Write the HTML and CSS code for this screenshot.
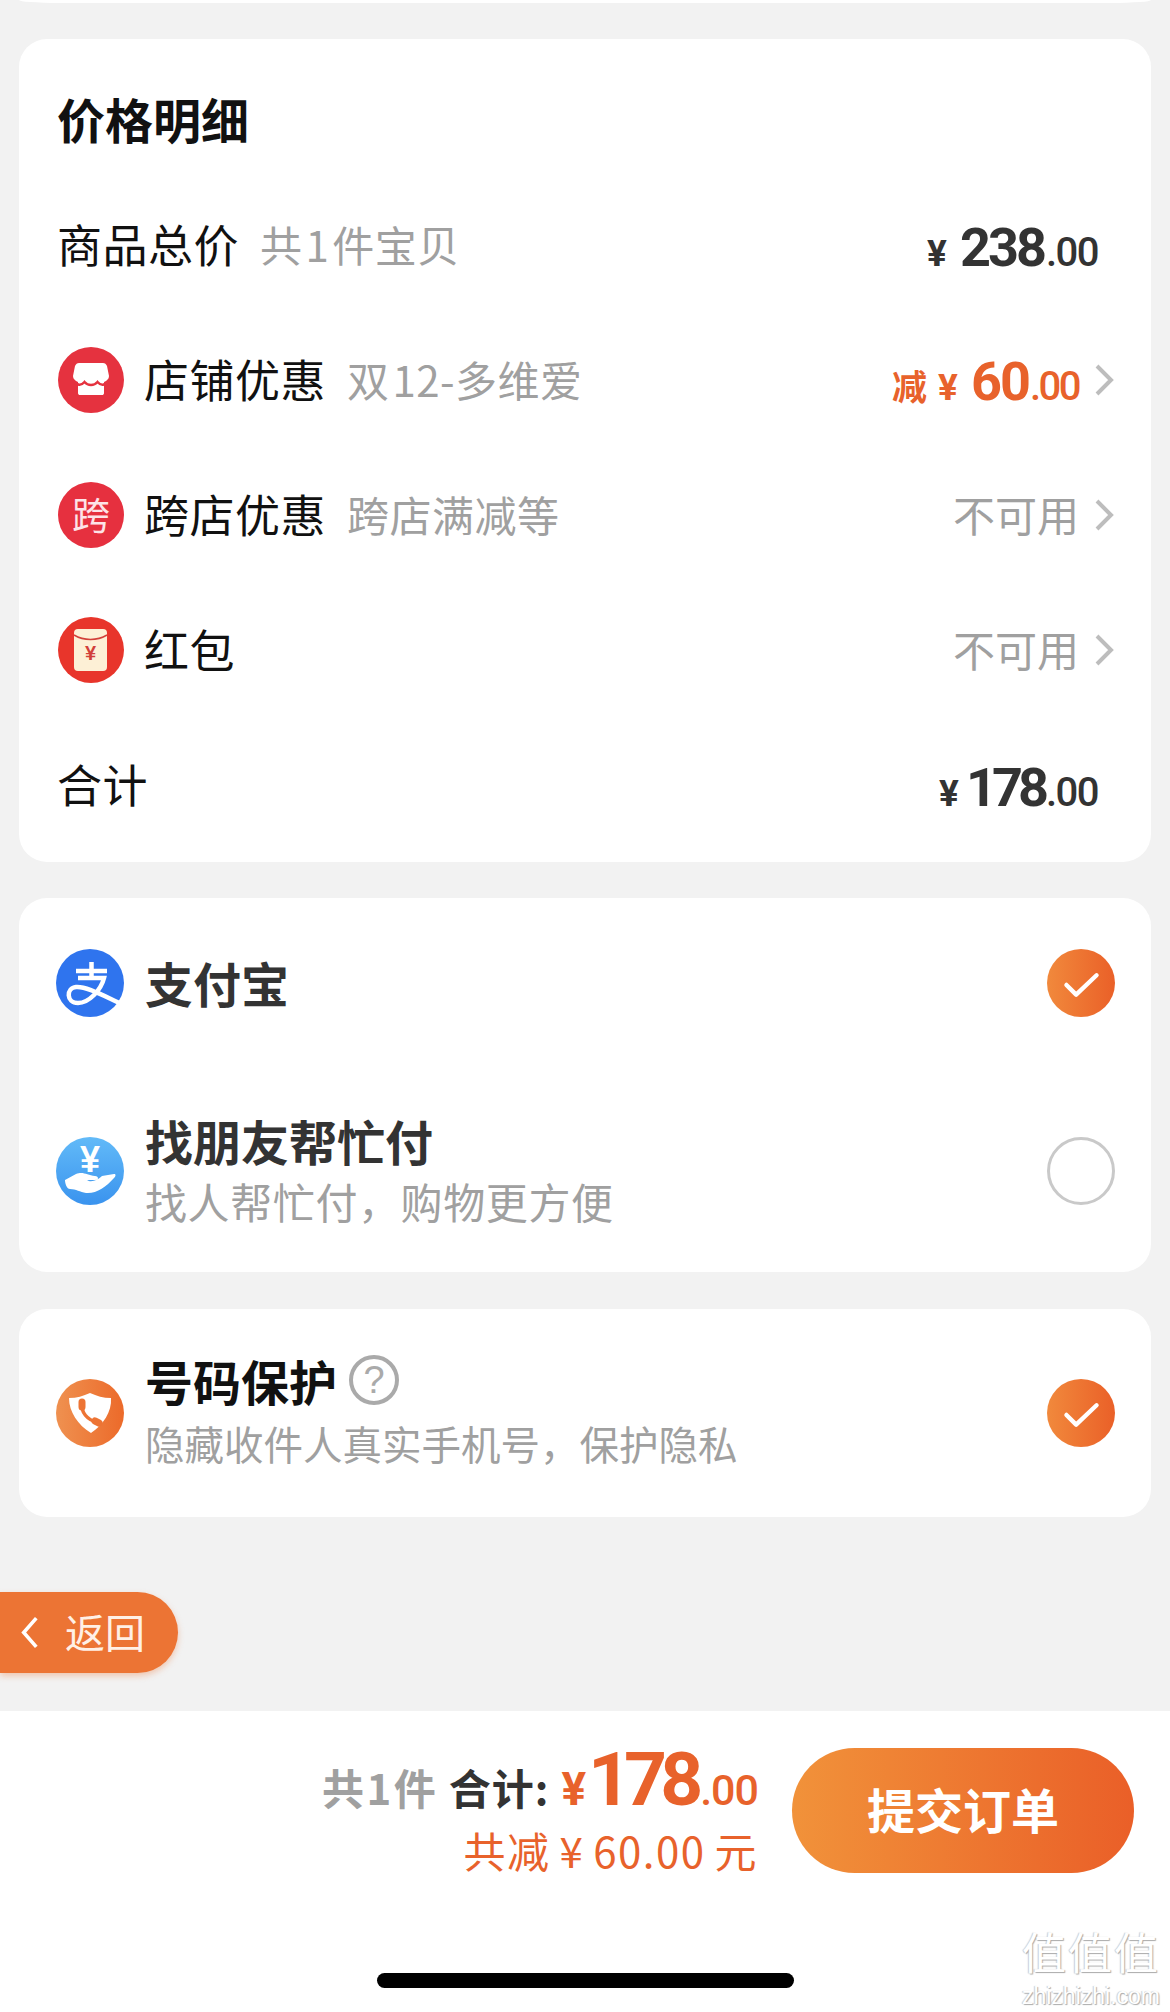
FILE: index.html
```html
<!DOCTYPE html>
<html lang="zh-CN">
<head>
<meta charset="utf-8">
<title>确认订单</title>
<link rel="stylesheet" href="styles.css">
</head>
<body>
<div class="page">
  <main class="main">
    <div class="prev-card"></div>

    <section class="card price-card">
      <h2 class="card-title">价格明细</h2>
      <div class="row">
        <span class="name">商品总价</span><span class="sub">共 1 件宝贝</span>
        <div class="price price-plain"><span class="yen">¥</span><span class="int">238</span><span class="dec">.00</span></div>
      </div>
      <div class="row">
        <svg class="ico" viewBox="0 0 66 66"><circle cx="33" cy="33" r="33" fill="#e5323f"/><path d="M21 16H45C47 16 48 17 49 19L51 29C51 32 49 34 46 35V46C46 47.500 45 48 44 48H22C21 48 20 47.500 20 46V35C17 34 15 32 15 29L17 19C18 17 19 16 21 16Z" fill="#fff"/><path d="M15 33C19 39 23 39 26.500 35C30 39 36 39 39.500 35C43 39 47 39 51 33" fill="none" stroke="#e5323f" stroke-width="2.500"/></svg>
        <span class="name">店铺优惠</span><span class="sub">双 12-多维爱</span>
        <div class="price price-off"><span class="off">减</span><span class="yen">¥</span><span class="int">60</span><span class="dec">.00</span></div>
        <svg class="chev" viewBox="0 0 20 32"><path d="M3 2L17 16L3 30"/></svg>
      </div>
      <div class="row">
        <span class="ico kua">跨</span>
        <span class="name">跨店优惠</span><span class="sub">跨店满减等</span>
        <span class="na">不可用</span>
        <svg class="chev" viewBox="0 0 20 32"><path d="M3 2L17 16L3 30"/></svg>
      </div>
      <div class="row">
        <svg class="ico" viewBox="0 0 66 66"><circle cx="33" cy="33" r="33" fill="#e8352b"/><rect x="16" y="12" width="33" height="42" rx="4" fill="#fdf0d6"/><path d="M16 18C26 24 39 24 49 18" fill="none" stroke="#d2403a" stroke-width="1.500"/><text x="32.500" y="43" class="ico-yen">¥</text></svg>
        <span class="name">红包</span>
        <span class="na">不可用</span>
        <svg class="chev" viewBox="0 0 20 32"><path d="M3 2L17 16L3 30"/></svg>
      </div>
      <div class="row">
        <span class="name">合计</span>
        <div class="price price-plain price-total"><span class="yen">¥</span><span class="int">178</span><span class="dec">.00</span></div>
      </div>
    </section>

    <section class="card pay-card">
      <div class="opt opt-first">
        <svg class="ico-l" viewBox="0 0 68 68"><circle cx="34" cy="34" r="34" fill="#2f74ee"/><path d="M20 22H51M35.500 13V29M22 29H48C45 41 33 54 22 54C10 54 10 39 20 38C30 37 48 47 66 55" fill="none" stroke="#fff" stroke-width="4.500"/></svg>
        <div class="opt-body"><div class="opt-name">支付宝</div></div>
        <svg class="check" viewBox="0 0 70 70"><defs><linearGradient id="g1"><stop offset="0" stop-color="#f1893c"/><stop offset="1" stop-color="#ea6028"/></linearGradient></defs><circle cx="35" cy="35" r="35" fill="url(#g1)"/><path d="M20 37L30 47L51 27" fill="none" stroke="#fff" stroke-width="4.500" stroke-linecap="round" stroke-linejoin="round"/></svg>
      </div>
      <div class="opt opt-second">
        <svg class="ico-l" viewBox="0 0 68 68"><defs><linearGradient id="g2" x1="0" y1="0" x2="0" y2="1"><stop offset="0" stop-color="#62baf8"/><stop offset="1" stop-color="#3a93ee"/></linearGradient></defs><circle cx="34" cy="34" r="34" fill="url(#g2)"/><text x="34" y="35" class="ico-yen ico-yen-w">¥</text><path d="M9 43L20 37C27 34 31 38 39 39C43 39.500 43 43 39 43H31C35 46 42 43 46 39L58 37C60 37 60 39 58 41C50 50 40 57 30 56C24 55 20 52 14 52C11 52 9 47 9 43Z" fill="#fff"/></svg>
        <div class="opt-body"><div class="opt-name">找朋友帮忙付</div><div class="opt-desc">找人帮忙付，购物更方便</div></div>
        <span class="radio"></span>
      </div>
    </section>

    <section class="card protect-card">
      <div class="opt opt-third">
        <svg class="ico-l" viewBox="0 0 68 68"><defs><linearGradient id="g3"><stop offset="0" stop-color="#ef9150"/><stop offset="1" stop-color="#ec6a2a"/></linearGradient></defs><circle cx="34" cy="34" r="34" fill="url(#g3)"/><path d="M34 14C41 17 47 19 55 19C56 33 47 46 35 54C22 46 13 33 13 19C21 19 27 17 34 14Z" fill="#fff"/><path d="M26 25C25 33 31 41 41 43" fill="none" stroke="#ed7434" stroke-width="3.500" stroke-linecap="round"/><path d="M26 23L26 28M39 42L43 44" fill="none" stroke="#ed7434" stroke-width="7" stroke-linecap="round"/></svg>
        <div class="opt-body"><div class="opt-name opt-name-dark">号码保护<span class="help">?</span></div><div class="opt-desc opt-desc-small">隐藏收件人真实手机号，保护隐私</div></div>
        <svg class="check" viewBox="0 0 70 70"><circle cx="35" cy="35" r="35" fill="url(#g1)"/><path d="M20 37L30 47L51 27" fill="none" stroke="#fff" stroke-width="4.500" stroke-linecap="round" stroke-linejoin="round"/></svg>
      </div>
    </section>

    <div class="back"><svg class="back-chev" viewBox="0 0 20 36"><path d="M17 2L3 18L17 34"/></svg><span class="back-text">返回</span></div>
  </main>

  <footer class="bar">
    <div class="bar-row">
      <div class="summary">
        <div class="sum-top"><span class="sum-count">共 1 件</span><span class="sum-label">合计:</span><span class="sum-yen">¥</span><span class="sum-int">178</span><span class="sum-dec">.00</span></div>
        <div class="sum-off">共减 ¥ 60.00 元</div>
      </div>
      <button class="submit"><span class="submit-text">提交订单</span></button>
    </div>
    <div class="home"></div>
    <div class="mark"><div class="mark-zh">值值值</div><div class="mark-en">zhizhizhi.com</div></div>
  </footer>
</div>
</body>
</html>
```

FILE: styles.css
```css
* { box-sizing: border-box; }
html, body { margin: 0; padding: 0; }
body {
  width: 1170px;
  height: 2012px;
  overflow: hidden;
  background: #f2f2f2;
  font-family: "Noto Sans CJK SC", "Noto Sans", sans-serif;
  color: #111;
}
.page { height: 2012px; display: flex; flex-direction: column; }
.main { flex: 1; display: flex; flex-direction: column; }

.prev-card {
  height: 3px;
  margin: 0 19px;
  background: #fff;
  border-radius: 0 0 40px 40px / 0 0 3px 3px;
}
.card { margin: 0 19px; background: #fff; border-radius: 28px; }
.price-card { margin-top: 36px; height: 823px; padding-top: 49px; }
.pay-card { margin-top: 36px; height: 374px; }
.protect-card { margin-top: 37px; height: 208px; }

.card-title {
  margin: 0 0 29px;
  padding-left: 38px;
  font-size: 48px;
  line-height: 60px;
  font-weight: 700;
  color: #111;
}
.row {
  height: 135px;
  padding: 0 37px 0 39px;
  display: flex;
  align-items: center;
}
.row > .name:first-child { margin-left: -1px; }
.ico { width: 66px; height: 66px; flex: none; margin-right: 20px; }
.kua {
  border-radius: 50%;
  background: #e6303f;
  color: #fde3e8;
  font-size: 38px;
  line-height: 62px;
  text-align: center;
}
.ico-yen { font-family: "Liberation Sans", sans-serif; font-size: 20px; font-weight: 700; fill: #d2403a; text-anchor: middle; }
.ico-yen-w { font-size: 36px; fill: #fff; }
.name { font-size: 45px; line-height: 60px; color: #111; letter-spacing: 0.500px; padding-bottom: 2px; }
.sub { margin-left: 21px; font-size: 42px; line-height: 60px; color: #a0a0a0; word-spacing: -7px; letter-spacing: 0.500px; padding-bottom: 2px; }

.price {
  margin-left: auto;
  display: flex;
  align-items: baseline;
  font-family: Roboto, "Liberation Sans", sans-serif;
  color: #333;
}
.price-plain { margin-right: 16px; padding-top: 6px; }
.price .yen { font-size: 37px; font-weight: 700; margin-right: 13px; }
.price .int { font-size: 54px; font-weight: 700; letter-spacing: -3px; }
.price .dec { font-size: 40px; font-weight: 500; letter-spacing: -1.500px; margin-left: 2px; }
.price-total .yen { margin-right: 7px; }
.price-total .int { letter-spacing: -5px; }
.price-off { color: #e8622b; padding-top: 4px; }
.price-off .off { font-family: "Noto Sans CJK SC", sans-serif; font-size: 35px; font-weight: 700; margin-right: 11px; }
.price-off .int { letter-spacing: -2px; }
.price-off .dec { letter-spacing: -2.500px; margin-left: 1px; }
.chev { width: 20px; height: 32px; flex: none; margin-left: 15px; }
.chev path { fill: none; stroke: #bdbdbd; stroke-width: 4; }
.na { margin-left: auto; font-size: 42px; line-height: 60px; color: #a0a0a0; padding-bottom: 2px; }

.opt { display: flex; align-items: center; padding: 0 36px 0 37px; }
.opt-first { height: 170px; }
.opt-second { height: 206px; }
.opt-third { height: 208px; }
.ico-l { width: 68px; height: 68px; flex: none; }
.opt-body { margin-left: 21px; }
.opt-name {
  margin-top: -1px;
  margin-bottom: 1px;
  font-size: 48px;
  line-height: 60px;
  font-weight: 700;
  color: #333;
  display: flex;
  align-items: center;
}
.opt-name-dark { color: #111; margin-top: -3px; margin-bottom: 3px; }
.opt-desc { font-size: 42px; line-height: 60px; color: #a0a0a0; letter-spacing: 0.600px; }
.opt-desc-small { font-size: 39.500px; letter-spacing: 0; }
.help {
  width: 50px;
  height: 50px;
  margin-left: 12px;
  border: 4px solid #aaa;
  border-radius: 50%;
  font-family: "Liberation Sans", sans-serif;
  font-weight: 400;
  font-size: 38px;
  line-height: 42px;
  text-align: center;
  color: #aaa;
}
.check, .radio { width: 68px; height: 68px; flex: none; margin-left: auto; }
.radio { border: 3.500px solid #c9c9c9; border-radius: 50%; }

.back {
  margin-top: 75px;
  width: 178px;
  height: 81px;
  display: flex;
  align-items: center;
  padding-left: 21px;
  background: #ec7434;
  border-radius: 0 42px 42px 0;
  box-shadow: 0 3px 6px rgba(236, 116, 52, 0.35);
  color: #fff0e6;
  font-size: 40px;
}
.back-chev { width: 18px; height: 35px; margin-right: 26px; }
.back-chev path { fill: none; stroke: #fff; stroke-width: 4; }
.back-text { padding-bottom: 3px; }

.bar {
  position: relative;
  height: 301px;
  background: #fff;
  display: flex;
  flex-direction: column;
  align-items: center;
  padding-top: 37px;
}
.bar-row { width: 100%; height: 125px; display: flex; justify-content: flex-end; padding-right: 36px; }
.summary { display: flex; flex-direction: column; align-items: flex-end; margin-top: -8px; }
.sum-top { display: flex; align-items: baseline; height: 78px; }
.sum-count { font-size: 42px; font-weight: 700; color: #a0a0a0; word-spacing: -7px; margin-right: 13px; }
.sum-label { font-size: 42px; font-weight: 700; color: #333; margin-right: 12px; letter-spacing: 1px; }
.sum-yen, .sum-int, .sum-dec { font-family: Roboto, "Liberation Sans", sans-serif; color: #e8622b; font-weight: 700; }
.sum-yen { font-size: 46px; margin-right: 2px; }
.sum-int { font-size: 75px; letter-spacing: -7px; line-height: 78px; }
.sum-dec { font-size: 43px; font-weight: 500; letter-spacing: -1px; margin-left: 4px; }
.sum-off { margin-top: 4px; font-size: 42px; line-height: 56px; color: #e8622b; word-spacing: -2px; letter-spacing: 1.500px; }
.submit {
  width: 342px;
  height: 125px;
  margin-left: 34px;
  border: 0;
  border-radius: 63px;
  background: linear-gradient(90deg, #f1923a, #ea5f28);
  color: #fff;
  font-family: "Noto Sans CJK SC", sans-serif;
  font-size: 48px;
  font-weight: 700;
}
.submit-text { display: block; padding-bottom: 6px; }
.home { width: 417px; height: 15px; margin-top: 100px; background: #000; border-radius: 8px; }

.mark { position: absolute; right: 8px; bottom: 3px; width: 142px; text-align: center; color: #fff; }
.mark-zh {
  font-size: 44px;
  line-height: 64px;
  letter-spacing: 2px;
  text-shadow: 1px 1px 1px #aaa, -1px 0 1px #ccc;
}
.mark-en {
  font-family: "Liberation Sans", sans-serif;
  font-size: 23px;
  line-height: 26px;
  text-shadow: 1px 1px 1px #aaa, -1px 0 1px #ccc;
}
```
